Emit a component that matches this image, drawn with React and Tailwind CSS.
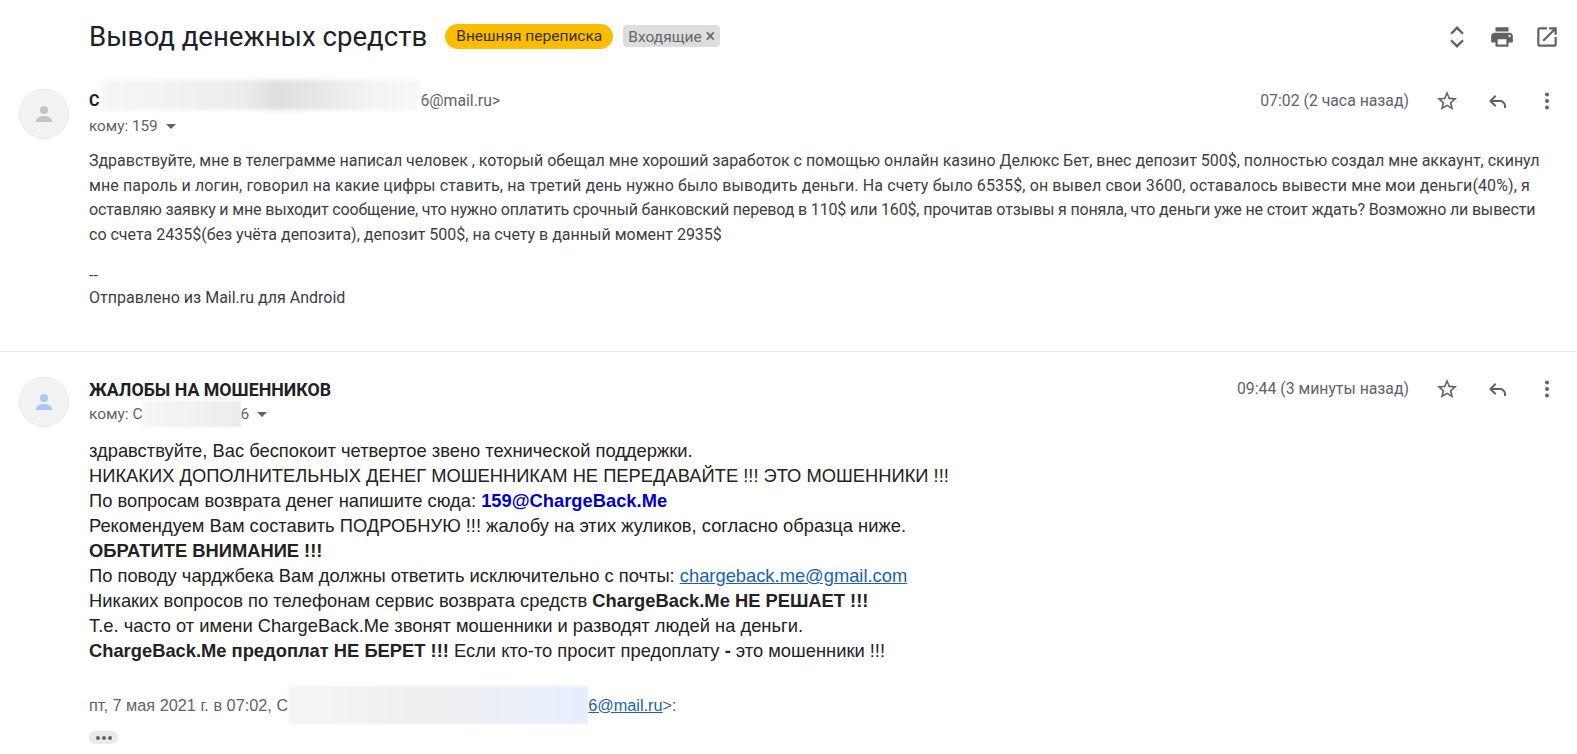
import React from 'react';

const roboto = "font-['Roboto',sans-serif]";
const arial = "font-['Liberation_Sans',Arial,sans-serif]";

function Avatar({ color }) {
  return (
    <div className="w-[50px] h-[50px] rounded-full bg-[#f1f3f4] border border-[#e8e8e8] flex items-center justify-center shrink-0">
      <svg width="24" height="24" viewBox="0 0 24 24" fill={color}>
        <circle cx="12" cy="8" r="4" />
        <path d="M4 19c0-3 4-5 8-5s8 2 8 5v1H4z" />
      </svg>
    </div>
  );
}

function MessageActions({ time }) {
  return (
    <div className="flex items-center shrink-0">
      <span className="text-[15.8px] text-[#5f6368] mr-[26px]">{time}</span>
      <svg className="mr-[26px]" width="24" height="24" viewBox="0 0 24 24" fill="#5f6368">
        <path d="M22 9.24l-7.19-.62L12 2 9.19 8.63 2 9.24l5.46 4.73L5.82 21 12 17.27 18.18 21l-1.63-7.03L22 9.24zM12 15.4l-3.76 2.27 1-4.28-3.32-2.88 4.38-.38L12 6.1l1.71 4.04 4.38.38-3.32 2.88 1 4.28L12 15.4z" />
      </svg>
      <svg className="mr-[26px]" width="24" height="24" viewBox="0 0 24 24" fill="#5f6368">
        <path d="M21 19h-2v-2c0-2.2-1.8-4-4-4H7.8l3.6 3.6L10 18l-6-6 6-6 1.4 1.4L7.8 11H15c3.3 0 6 2.7 6 6z" />
      </svg>
      <svg width="24" height="24" viewBox="0 0 24 24" fill="#5f6368">
        <circle cx="12" cy="5.5" r="2" />
        <circle cx="12" cy="12" r="2" />
        <circle cx="12" cy="18.5" r="2" />
      </svg>
    </div>
  );
}

function Caret() {
  return <span className="inline-block w-0 h-0 ml-[8px] align-middle border-x-[5px] border-x-transparent border-t-[5px] border-t-[#5f6368]" />;
}

export default function App() {
  return (
    <div className={`${roboto} w-[1577px] h-[754px] overflow-hidden bg-white text-[#222]`}>
      {/* Subject */}
      <div className="h-[79px] pl-[89px] pr-[17px] pt-[21px] flex items-start">
        <h1 className="text-[27.6px] leading-[32px] text-[#202124] font-normal">Вывод денежных средств</h1>
        <span className="ml-[18px] mt-[3px] h-[25px] px-[11px] rounded-full bg-[#fbbc04] text-[15.5px] leading-[25px] text-[#3c3000]">Внешняя переписка</span>
        <span className="ml-[10px] mt-[4px] h-[22px] px-[5px] rounded-[4px] bg-[#dddddd] text-[15.5px] leading-[22px] text-[#666]">Входящие <span className="text-[18px] leading-[22px]">×</span></span>
        <div className="ml-auto flex items-center gap-[19px] mt-[3px]">
          <svg width="26" height="26" viewBox="0 0 24 24" fill="none" stroke="#5f6368" strokeWidth="2.2">
            <path d="M6.5 9L12 3.5L17.5 9" />
            <path d="M6.5 15L12 20.5L17.5 15" />
          </svg>
          <svg width="26" height="26" viewBox="0 0 24 24" fill="#5f6368">
            <path d="M19 8H5c-1.66 0-3 1.34-3 3v6h4v4h12v-4h4v-6c0-1.66-1.34-3-3-3zm-3 11H8v-5h8v5zm3-7c-.55 0-1-.45-1-1s.45-1 1-1 1 .45 1 1-.45 1-1 1zm-1-9H6v4h12V3z" />
          </svg>
          <svg width="26" height="26" viewBox="0 0 24 24" fill="#5f6368">
            <path d="M19 19H5V5h7V3H5a2 2 0 0 0-2 2v14a2 2 0 0 0 2 2h14a2 2 0 0 0 2-2v-7h-2v7zM14 3v2h3.59l-9.83 9.83 1.41 1.41L19 6.41V10h2V3h-7z" />
          </svg>
        </div>
      </div>

      {/* First message */}
      <div className="h-[273px] border-b border-[#e8e8e8] pl-[19px] pr-[18px] flex gap-[20px] pt-[10px]">
        <Avatar color="#c4c4c4" />
        <div className="flex-1 min-w-0">
          <div className="flex items-center justify-between h-[24px]">
            <div className="flex items-center text-[15.8px]">
              <span className="font-bold text-[16px] text-[#202124]">С</span>
              <span className="ml-[3px] w-[318px] h-[30px] -translate-y-[6px] bg-[linear-gradient(90deg,#f6f6f6,#ececec_45%,#dedede_55%,#f3f3f3_85%,#f8f8f8)] blur-[2px]" />
              <span className="text-[#5f6368]">6@mail.ru&gt;</span>
            </div>
            <MessageActions time="07:02 (2 часа назад)" />
          </div>
          <div className="text-[15.3px] leading-[20px] text-[#5f6368] mt-[3px]">кому: 159<Caret /></div>
          <div className="mt-[13px] text-[16px] leading-[24.6px] text-[#3c4043] whitespace-nowrap">
            <div className="tracking-[-0.02px]">Здравствуйте, мне в телеграмме написал человек , который обещал мне хороший заработок с помощью онлайн казино Делюкс Бет, внес депозит 500$, полностью создал мне аккаунт, скинул</div>
            <div className="tracking-[0.11px]">мне пароль и логин, говорил на какие цифры ставить, на третий день нужно было выводить деньги. На счету было 6535$, он вывел свои 3600, оставалось вывести мне мои деньги(40%), я</div>
            <div className="tracking-[-0.16px]">оставляю заявку и мне выходит сообщение, что нужно оплатить срочный банковский перевод в 110$ или 160$, прочитав отзывы я поняла, что деньги уже не стоит ждать? Возможно ли вывести</div>
            <div>со счета 2435$(без учёта депозита), депозит 500$, на счету в данный момент 2935$</div>
          </div>
          <div className="mt-[18px] text-[16px] leading-[22px] text-[#3c4043]">
            <div>--</div>
            <div>Отправлено из Mail.ru для Android</div>
          </div>
        </div>
      </div>

      {/* Second message */}
      <div className="pl-[19px] pr-[18px] flex gap-[20px] pt-[25px]">
        <Avatar color="#a8c7fa" />
        <div className="flex-1 min-w-0">
          <div className="flex items-center justify-between h-[24px]">
            <span className="text-[17.8px] font-bold text-[#202124] translate-y-[1px]">ЖАЛОБЫ НА МОШЕННИКОВ</span>
            <MessageActions time="09:44 (3 минуты назад)" />
          </div>
          <div className="flex items-center text-[15.5px] leading-[20px] text-[#5f6368]">
            <span>кому: С</span>
            <span className="w-[98px] h-[26px] bg-[linear-gradient(90deg,#f6f6f6,#ececec)] blur-[1px]" />
            <span>6</span>
            <Caret />
          </div>
          <div className={`${arial} mt-[11px] text-[18.33px] leading-[25px] text-[#222]`}>
            <div>здравствуйте, Вас беспокоит четвертое звено технической поддержки.</div>
            <div>НИКАКИХ ДОПОЛНИТЕЛЬНЫХ ДЕНЕГ МОШЕННИКАМ НЕ ПЕРЕДАВАЙТЕ !!! ЭТО МОШЕННИКИ !!!</div>
            <div>По вопросам возврата денег напишите сюда: <b className="text-[#0000cc]">159@ChargeBack.Me</b></div>
            <div>Рекомендуем Вам составить ПОДРОБНУЮ !!! жалобу на этих жуликов, согласно образца ниже.</div>
            <div><b>ОБРАТИТЕ ВНИМАНИЕ !!!</b></div>
            <div>По поводу чарджбека Вам должны ответить исключительно с почты: <a className="text-[#1a5fb4] underline">chargeback.me@gmail.com</a></div>
            <div>Никаких вопросов по телефонам сервис возврата средств <b>ChargeBack.Me НЕ РЕШАЕТ !!!</b></div>
            <div>Т.е. часто от имени ChargeBack.Me звонят мошенники и разводят людей на деньги.</div>
            <div><b>ChargeBack.Me предоплат НЕ БЕРЕТ !!!</b> Если кто-то просит предоплату <b>-</b> это мошенники !!!</div>
          </div>
          <div className={`${arial} mt-[23px] flex items-center text-[16.3px] text-[#5f6368]`}>
            <span>пт, 7 мая 2021 г. в 07:02, С</span>
            <span className="w-[300px] h-[38px] bg-[linear-gradient(90deg,#f6f6f6,#eeeeee_50%,#eaf0fb_85%,#e6eefb)] blur-[1px]" />
            <a className="text-[#1a5fb4] underline">6@mail.ru</a>
            <span>&gt;:</span>
          </div>
          <div className="mt-[7px] w-[29px] h-[13px] rounded-[6px] bg-[#e8eaed] flex items-center justify-center gap-[2px]">
            <span className="w-[4px] h-[4px] rounded-full bg-[#5f6368]" />
            <span className="w-[4px] h-[4px] rounded-full bg-[#5f6368]" />
            <span className="w-[4px] h-[4px] rounded-full bg-[#5f6368]" />
          </div>
        </div>
      </div>
    </div>
  );
}
